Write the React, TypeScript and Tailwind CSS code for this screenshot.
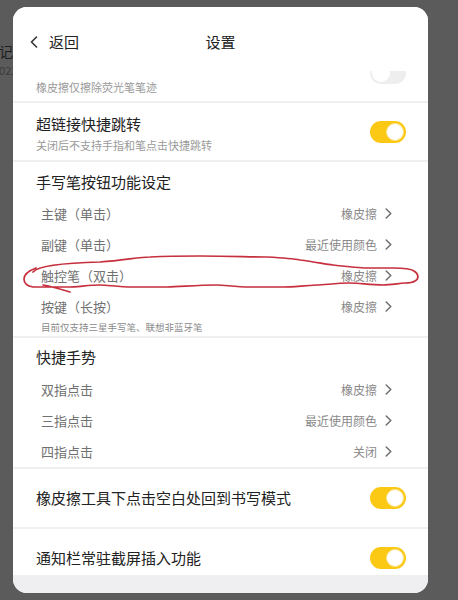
import React from "react";

function Toggle({ on }: { on: boolean }) {
    if (!on) {
        return (
            <div className="w-[36px] h-[22px] rounded-full bg-[#ebebeb] flex items-center justify-start p-[2px]">
                <div className="w-[18px] h-[18px] rounded-full bg-white" />
            </div>
        );
    }
    return (
        <div className="w-[36px] h-[22px] rounded-full bg-[#fbc814] flex items-center justify-end p-[2px]">
            <div className="w-[18px] h-[18px] rounded-full bg-white border border-[#fbe38a]" />
        </div>
    );
}

function Chevron() {
    return (
        <svg width="7" height="11" viewBox="0 0 7 11" className="ml-[8px]">
            <polyline points="1.2,1 5.8,5.5 1.2,10" fill="none" stroke="#6f6f6f" strokeWidth="1.5" strokeLinejoin="round" strokeLinecap="round" />
        </svg>
    );
}

function SwitchRow({ title, sub, on }: { title: string; sub: string; on: boolean }) {
    return (
        <div className="h-[59px] border-b-2 border-[#f0f0f0] flex justify-between pl-[23px] pr-[22px]">
            <div className="pt-[12px] flex flex-col">
                <span className="text-[15px] leading-[18px] text-[#222]">{title}</span>
                <span className="text-[11px] leading-[14px] mt-[5px] text-[#9a9a9a]">{sub}</span>
            </div>
            <div className="self-center">
                <Toggle on={on} />
            </div>
        </div>
    );
}

function PlainSwitchRow({ title }: { title: string }) {
    return (
        <div className="h-[60px] border-b-2 border-[#f0f0f0] flex items-center justify-between pl-[23px] pr-[22px]">
            <span className="text-[15px] leading-[18px] text-[#222]">{title}</span>
            <Toggle on />
        </div>
    );
}

function Item({ label, value }: { label: string; value: string }) {
    return (
        <div className="h-[31px] flex items-center justify-between pl-[28px] pr-[36px]">
            <span className="text-[13px] text-[#707070]">{label}</span>
            <div className="flex items-center">
                <span className="text-[12px] text-[#8a8a8a]">{value}</span>
                <Chevron />
            </div>
        </div>
    );
}

export default function App() {
    return (
        <div
            className="relative w-[458px] h-[600px] bg-[#5b5b5b] overflow-hidden"
            style={{ fontFamily: '"Noto Sans CJK SC", "Noto Sans", sans-serif' }}
        >
            {/* page behind the dialog */}
            <span className="absolute left-[-15px] top-[41px] text-[14px] text-[#1e1e1e]">笔记</span>
            <span className="absolute left-[-7px] top-[62px] text-[11px] text-[#3a3a3a]">2023</span>

            <div className="relative pt-[7px] pl-[13px]">
                <div className="w-[415px] h-[586px] bg-white rounded-[14px] overflow-hidden flex flex-col">
                    {/* header */}
                    <div className="h-[64px] shrink-0 bg-white">
                        <div className="mt-[24px] h-[20px] grid grid-cols-[1fr_auto_1fr] items-center">
                            <div className="flex items-center pl-[17px]">
                                <svg width="8" height="12" viewBox="0 0 8 12">
                                    <polyline points="6.5,1 1.5,6 6.5,11" fill="none" stroke="#333" strokeWidth="1.6" strokeLinejoin="round" strokeLinecap="round" />
                                </svg>
                                <span className="ml-[11px] text-[15px] text-[#222]">返回</span>
                            </div>
                            <span className="text-[15px] text-[#222]">设置</span>
                            <div />
                        </div>
                    </div>

                    {/* scrolling list */}
                    <div className="flex-1 overflow-hidden">
                        {/* row scrolled half under the header */}
                        <div className="h-[32px] border-b-2 border-[#f0f0f0] flex justify-between pl-[23px] pr-[22px]">
                            <span className="mt-[9px] text-[11px] leading-[14px] text-[#9a9a9a]">橡皮擦仅擦除荧光笔笔迹</span>
                            <div className="h-[13px] overflow-hidden opacity-80">
                                <div className="-mt-[9px]">
                                    <Toggle on={false} />
                                </div>
                            </div>
                        </div>

                        <SwitchRow title="超链接快捷跳转" sub="关闭后不支持手指和笔点击快捷跳转" on />

                        <div className="border-b-2 border-[#f0f0f0] pb-[3px]">
                            <div className="h-[36px] pt-[4px] flex items-center pl-[23px]">
                                <span className="text-[15px] text-[#222]">手写笔按钮功能设定</span>
                            </div>
                            <Item label="主键（单击）" value="橡皮擦" />
                            <Item label="副键（单击）" value="最近使用颜色" />
                            <Item label="触控笔（双击）" value="橡皮擦" />
                            <Item label="按键（长按）" value="橡皮擦" />
                            <div className="-mt-[1px] pl-[28px] text-[9.5px] leading-[12px] text-[#8a8a8a]">
                                目前仅支持三星手写笔、联想非蓝牙笔
                            </div>
                        </div>

                        <div className="border-b-2 border-[#f0f0f0]">
                            <div className="h-[36px] pt-[2px] flex items-center pl-[23px]">
                                <span className="text-[15px] text-[#222]">快捷手势</span>
                            </div>
                            <Item label="双指点击" value="橡皮擦" />
                            <Item label="三指点击" value="最近使用颜色" />
                            <Item label="四指点击" value="关闭" />
                        </div>

                        <PlainSwitchRow title="橡皮擦工具下点击空白处回到书写模式" />
                        <PlainSwitchRow title="通知栏常驻截屏插入功能" />
                    </div>

                    <div className="h-[18px] shrink-0 bg-[#efeff2]" />
                </div>
            </div>

            {/* hand-drawn red mark */}
            <svg className="absolute left-0 top-0 pointer-events-none" width="458" height="600" viewBox="0 0 458 600">
                <path
                    d="M 70 292 C 60 289, 50 286, 43 285 M 33 272 C 38 266, 60 263, 100 262 C 125 260, 140 257, 150 257 C 170 256, 185 256, 200 256 C 230 256, 250 257, 267 257 C 285 258, 295 259, 300 260 C 315 262, 325 264, 333 265 C 350 267, 360 268, 367 268 C 380 268, 388 268, 393 268 C 405 268, 411 269, 414 271 C 419 274, 419 279, 415 281 C 412 283, 408 283, 405 283 C 395 284, 388 285, 383 285 C 370 285, 360 283, 350 283 C 335 283, 325 285, 317 285 C 300 286, 292 287, 283 287 C 270 287, 260 287, 250 287 C 235 287, 225 285, 217 285 C 195 285, 180 287, 167 287 C 150 287, 140 287, 133 287 C 118 287, 108 285, 100 285 C 88 285, 78 287, 67 287 C 50 287, 40 287, 33 287 C 27 286, 24 283, 24 279 C 24 274, 28 271, 36 268"
                    fill="none"
                    stroke="#c62f3d"
                    strokeWidth="1.7"
                    strokeLinecap="round"
                />
            </svg>
        </div>
    );
}
